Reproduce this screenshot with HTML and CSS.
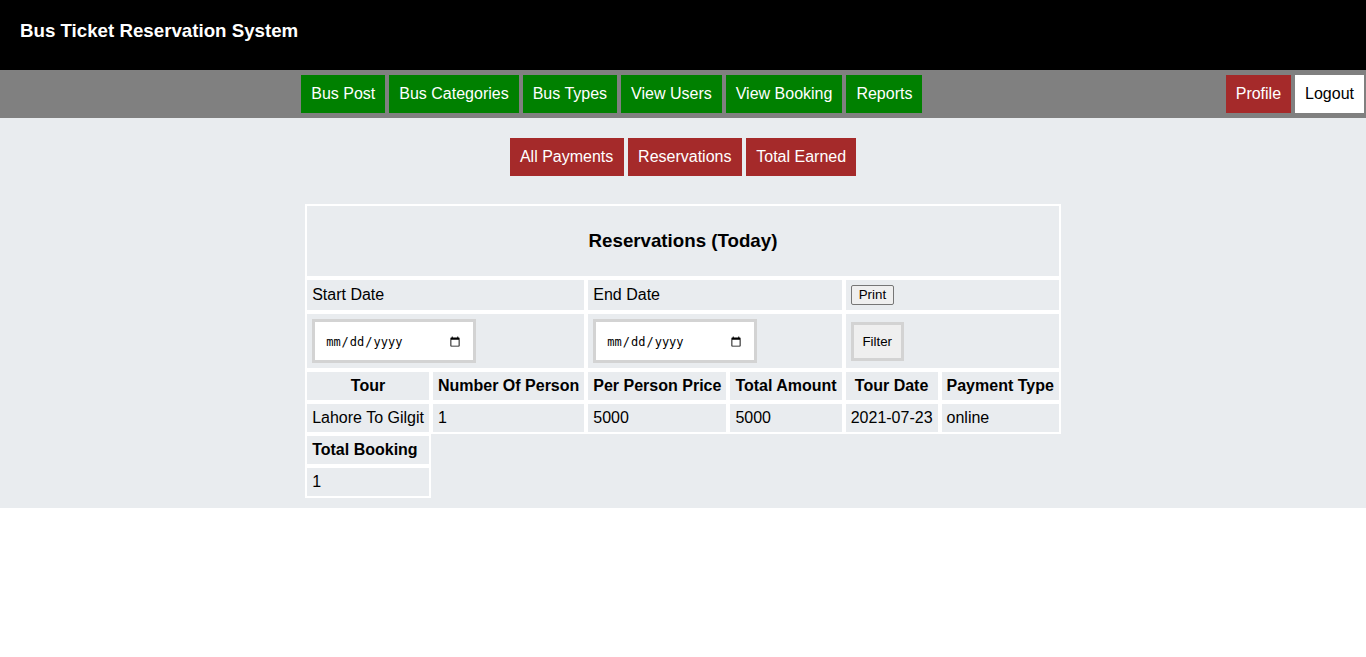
FILE: index.html
```html
<!DOCTYPE html>
<html lang="en">
<head>
<meta charset="utf-8">
<title>Bus Ticket Reservation System</title>
<link rel="stylesheet" href="styles.css">
</head>
<body>
<header class="topbar">
  <h3 class="brand">Bus Ticket Reservation System</h3>
</header>
<nav class="navbar">
  <div class="nav-main">
    <a class="nav-btn green" href="#">Bus Post</a>
    <a class="nav-btn green" href="#">Bus Categories</a>
    <a class="nav-btn green" href="#">Bus Types</a>
    <a class="nav-btn green" href="#">View Users</a>
    <a class="nav-btn green" href="#">View Booking</a>
    <a class="nav-btn green" href="#">Reports</a>
  </div>
  <div class="nav-side">
    <a class="nav-btn red" href="#">Profile</a>
    <a class="nav-btn white" href="#">Logout</a>
  </div>
</nav>
<main class="content">
  <div class="sub-nav">
    <a class="nav-btn sub red" href="#">All Payments</a>
    <a class="nav-btn sub red" href="#">Reservations</a>
    <a class="nav-btn sub red" href="#">Total Earned</a>
  </div>
  <table class="report">
    <tr>
      <th colspan="6" class="title-cell"><h3 class="title">Reservations (Today)</h3></th>
    </tr>
    <tr>
      <td colspan="2">Start Date</td>
      <td colspan="2">End Date</td>
      <td colspan="2"><button class="print-btn" type="button">Print</button></td>
    </tr>
    <tr>
      <td colspan="2"><input class="date-input" type="date"></td>
      <td colspan="2"><input class="date-input" type="date"></td>
      <td colspan="2"><button class="filter-btn" type="button">Filter</button></td>
    </tr>
    <tr>
      <th>Tour</th>
      <th>Number Of Person</th>
      <th>Per Person Price</th>
      <th>Total Amount</th>
      <th>Tour Date</th>
      <th>Payment Type</th>
    </tr>
    <tr>
      <td>Lahore To Gilgit</td>
      <td>1</td>
      <td>5000</td>
      <td>5000</td>
      <td>2021-07-23</td>
      <td>online</td>
    </tr>
    <tr>
      <th class="left">Total Booking</th>
    </tr>
    <tr>
      <td>1</td>
    </tr>
  </table>
</main>
</body>
</html>
```

FILE: styles.css
```css
html, body {
  margin: 0;
  padding: 0;
  background: #ffffff;
  font-family: "Liberation Sans", Arial, sans-serif;
  font-size: 16px;
  color: #000;
}

.topbar {
  background: #000;
  height: 70px;
  box-sizing: border-box;
  padding: 20px 20px 0;
}

.brand {
  margin: 0;
  color: #fff;
  font-size: 18.72px;
  font-weight: bold;
  line-height: 22px;
}

.navbar {
  background: #808080;
  display: flex;
  align-items: center;
  padding: 5px 2px 5px 2px;
}

.nav-main {
  flex: 1;
  display: flex;
  justify-content: center;
  gap: 4px;
}

.nav-side {
  display: flex;
  gap: 4px;
  margin-left: 4px;
}

.nav-btn {
  display: block;
  padding: 10px;
  line-height: 18px;
  font-size: 16px;
  text-decoration: none;
  color: #fff;
}

.nav-btn.sub {
  padding: 10px 10.4px;
}

.green { background: #008000; }
.red { background: #a52a2a; }
.white { background: #fff; color: #000; }

.content {
  background: #e9ecef;
  padding: 20px 0 10px;
}

.sub-nav {
  display: flex;
  justify-content: center;
  gap: 4px;
  margin-bottom: 28px;
}

.report {
  margin: 0 auto;
  border-collapse: separate;
  border-spacing: 0;
}

.report th,
.report td {
  border: 2px solid #fff;
  padding: 5px;
  font-size: 16px;
  line-height: 18px;
  text-align: left;
  vertical-align: middle;
}

.report th {
  text-align: center;
  font-weight: bold;
}

.report th.left {
  text-align: left;
}

.title {
  margin: 19px 0 19px;
  font-size: 18.72px;
  line-height: 22px;
}

.print-btn {
  display: block;
  font-family: "Liberation Sans", Arial, sans-serif;
  font-size: 13.33px;
  padding: 1px 7px;
  height: 20px;
  box-sizing: border-box;
  border: 1px solid #767676;
  border-radius: 2px;
  background: #efefef;
  color: #000;
  line-height: 16px;
}

.date-input {
  display: block;
  box-sizing: border-box;
  width: 164px;
  height: 44px;
  border: 3px solid #d3d3d3;
  background: #fff;
  padding: 2px 10px 0;
  font-size: 12px;
}

.filter-btn {
  display: block;
  box-sizing: border-box;
  font-family: "Liberation Sans", Arial, sans-serif;
  font-size: 13.33px;
  line-height: 15px;
  width: 53px;
  height: 39px;
  padding: 0;
  border: 3px solid #d3d3d3;
  background: #efefef;
  color: #000;
}
```
